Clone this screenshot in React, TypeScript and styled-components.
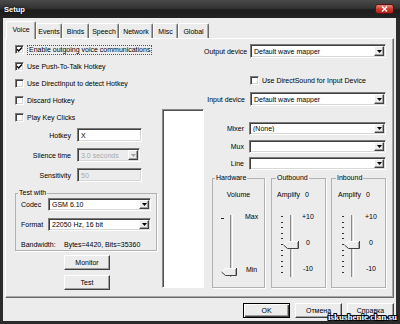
import React from 'react';
import styled, { createGlobalStyle } from 'styled-components';

const GlobalStyle = createGlobalStyle`
  html, body { margin: 0; padding: 0; background: #222; }
  body { font-family: "Liberation Sans", Arial, sans-serif; font-size: 7px; color: #000; }
  * { box-sizing: border-box; }
`;

const Window = styled.div`
  position: relative;
  width: 400px;
  height: 324px;
  display: flex;
  flex-direction: column;
  background: #2b2b2b;
  overflow: hidden;
`;

const TitleBar = styled.div`
  height: 18px;
  flex: none;
  display: flex;
  align-items: center;
  justify-content: space-between;
  padding: 0 6px 0 4px;
  background: linear-gradient(#4a4a4a 0%, #333 45%, #1d1d1d 55%, #232323 100%);
  color: #fff;
  font-weight: bold;
  font-size: 7.5px;
  text-shadow: 0 0 3px #000;
`;

const CloseBtn = styled.div`
  width: 19px;
  height: 10px;
  border-radius: 3px;
  border: 1px solid #5a1410;
  background: linear-gradient(#e8877a 0%, #cf3a2c 50%, #b1241a 100%);
  display: flex;
  align-items: center;
  justify-content: center;
`;

const Body = styled.div`
  flex: 1;
  margin: 0 4px 3px 3px;
  background: #ececec;
  padding: 3px 2px 0 2px;
  display: flex;
  flex-direction: column;
`;

const TabRow = styled.div`
  height: 17px;
  display: flex;
  align-items: flex-end;
  margin-left: 1px;
`;

const Tab = styled.div<{ $w: number; $active?: boolean }>`
  width: ${p => p.$w}px;
  height: ${p => (p.$active ? 18 : 15)}px;
  margin-bottom: ${p => (p.$active ? -1 : 0)}px;
  position: relative;
  z-index: ${p => (p.$active ? 1 : 0)};
  display: flex;
  align-items: center;
  justify-content: center;
  padding-bottom: ${p => (p.$active ? 2 : 0)}px;
  background: #ececec;
  border: 1px solid;
  border-bottom: none;
  border-color: #fff #6a6a6a #fff #fff;
  box-shadow: inset -1px 0 #a8a8a8;
  border-radius: 2px 2px 0 0;
  white-space: nowrap;
`;

const Panel = styled.div`
  height: 260px;
  flex: none;
  display: flex;
  border: 1px solid;
  border-color: #fff #6a6a6a #6a6a6a #fff;
  box-shadow: inset -1px -1px #a8a8a8;
`;

const LeftCol = styled.div`
  width: 156px;
  flex: none;
  display: flex;
  flex-direction: column;
  padding: 2px 0 0 9px;
`;

const CheckRow = styled.div<{ $h?: number; $indent?: number; $mt?: number }>`
  height: ${p => p.$h ?? 17}px;
  margin-top: ${p => p.$mt ?? 0}px;
  padding-left: ${p => p.$indent ?? 0}px;
  display: flex;
  align-items: center;
  gap: 3px;
  white-space: nowrap;
`;

const Box = styled.div`
  width: 9px;
  height: 9px;
  flex: none;
  background: #fff;
  border: 1px solid;
  border-color: #7a7a7a #fff #fff #7a7a7a;
  box-shadow: inset 1px 1px #404040, inset -1px -1px #d8d8d8;
  display: flex;
  align-items: center;
  justify-content: center;
`;

const Focus = styled.span`
  display: inline-block;
  height: 10px;
  line-height: 10px;
  padding: 0 1px;
  border: 1px dotted #555;
  line-height: 8px;
`;

const FormRow = styled.div<{ $h?: number; $mt: number; $label: number; $gap?: number; $left?: boolean }>`
  height: ${p => p.$h ?? 14}px;
  margin-top: ${p => p.$mt}px;
  display: flex;
  align-items: center;
  gap: ${p => p.$gap ?? 6}px;
  & > label {
    width: ${p => p.$label}px;
    flex: none;
    text-align: ${p => (p.$left ? 'left' : 'right')};
    white-space: nowrap;
  }
`;

const Edit = styled.div<{ $w?: number; $disabled?: boolean }>`
  width: ${p => (p.$w ? `${p.$w}px` : 'auto')};
  flex: ${p => (p.$w ? 'none' : '1')};
  height: 100%;
  display: flex;
  align-items: center;
  padding: 0 1px 0 3px;
  background: ${p => (p.$disabled ? '#ececec' : '#fff')};
  color: ${p => (p.$disabled ? '#a9a9a9' : '#000')};
  border: 1px solid;
  border-color: #7a7a7a #fff #fff #7a7a7a;
  box-shadow: inset 1px 1px #404040, inset -1px -1px #d8d8d8;
  white-space: nowrap;
`;

const ComboText = styled.span`
  flex: 1;
  overflow: hidden;
`;

const ArrowBtn = styled.div`
  width: 10px;
  height: calc(100% - 2px);
  flex: none;
  background: #ececec;
  border: 1px solid;
  border-color: #fff #404040 #404040 #fff;
  box-shadow: inset -1px -1px #a0a0a0;
  display: flex;
  align-items: center;
  justify-content: center;
`;

const Group = styled.fieldset<{ $w: number; $h?: number; $mt?: number; $ml?: number; $pad?: number }>`
  width: ${p => p.$w}px;
  ${p => (p.$h ? `height: ${p.$h}px;` : '')}
  margin: ${p => p.$mt ?? 0}px 0 0 ${p => p.$ml ?? 0}px;
  padding: 0 ${p => p.$pad ?? 0}px;
  border: 1px solid #b2b2b2;
  box-shadow: 1px 1px #fff;
  min-width: 0;
  display: flex;
  flex-direction: column;
  & > legend {
    font-size: 7px;
    line-height: 8px;
    padding: 0 1px;
  }
`;

const Legend = styled.legend<{ $ml: number }>`
  margin-left: ${p => p.$ml}px;
`;

const Bandwidth = styled.div`
  height: 12px;
  margin-top: 7px;
  display: flex;
  align-items: center;
  white-space: nowrap;
  & > span:first-child {
    width: 43px;
  }
`;

const Button = styled.button<{ $w: number; $mt?: number; $ml?: number; $default?: boolean }>`
  width: ${p => p.$w}px;
  height: 15px;
  flex: none;
  margin: ${p => p.$mt ?? 0}px 0 0 ${p => p.$ml ?? 0}px;
  padding: 0;
  font-family: inherit;
  font-size: 7px;
  color: #000;
  background: #ececec;
  border: 1px solid;
  border-color: ${p => (p.$default ? '#000' : '#fff #404040 #404040 #fff')};
  box-shadow: ${p =>
    p.$default
      ? 'inset 1px 1px #fff, inset -1px -1px #404040, inset -2px -2px #a0a0a0'
      : 'inset -1px -1px #a0a0a0'};
`;

const WhiteBox = styled.div`
  width: 42px;
  height: 179px;
  margin-top: 70px;
  flex: none;
  background: #fff;
  border: 1px solid;
  border-color: #8a8a8a #fff #fff #8a8a8a;
  box-shadow: inset 1px 1px #505050;
`;

const RightCol = styled.div`
  flex: 1;
  display: flex;
  flex-direction: column;
  padding-right: 9px;
`;

const GroupsRow = styled.div`
  margin-top: 4px;
  padding-left: 8px;
  display: flex;
  gap: 5px;
`;

const Caption = styled.div<{ $center?: boolean; $pl?: number }>`
  height: 8px;
  margin-top: 8px;
  padding-left: ${p => p.$pl ?? 0}px;
  display: flex;
  align-items: center;
  justify-content: ${p => (p.$center ? 'center' : 'flex-start')};
  gap: 5px;
  white-space: nowrap;
`;

const SliderArea = styled.div<{ $pl: number }>`
  margin-top: 15px;
  height: 66px;
  display: flex;
  padding-left: ${p => p.$pl}px;
`;

const ScaleLabels = styled.div<{ $h: number; $ml: number }>`
  height: ${p => p.$h}px;
  margin-left: ${p => p.$ml}px;
  display: flex;
  flex-direction: column;
  justify-content: space-between;
  align-items: center;
  line-height: 8px;
`;

const Footer = styled.div`
  margin-top: 5px;
  display: flex;
  justify-content: flex-end;
  gap: 5px;
`;

const Watermark = styled.div`
  position: absolute;
  right: 3px;
  bottom: 2px;
  font-family: "Liberation Serif", "Times New Roman", serif;
  font-weight: bold;
  font-size: 9px;
  color: #fff;
  text-shadow: 1px 0 #000, -1px 0 #000, 0 1px #000, 0 -1px #000, 1px 1px #000, -1px -1px #000, 1px -1px #000, -1px 1px #000;
`;

const Check = () => (
  <svg width="7" height="7" viewBox="0 0 7 7">
    <path d="M1 3.3 L2.7 5 L6 1.6" stroke="#000" strokeWidth="1.4" fill="none" />
  </svg>
);

const Arrow = ({ disabled }: { disabled?: boolean }) => (
  <svg width="5" height="3" viewBox="0 0 5 3">
    <path d="M0 0 H5 L2.5 3 Z" fill={disabled ? '#a0a0a0' : '#000'} />
  </svg>
);

const CheckBox = ({ checked }: { checked?: boolean }) => <Box>{checked && <Check />}</Box>;

const Combo = ({ value, w, disabled }: { value: string; w?: number; disabled?: boolean }) => (
  <Edit $w={w} $disabled={disabled}>
    <ComboText>{value}</ComboText>
    <ArrowBtn>
      <Arrow disabled={disabled} />
    </ArrowBtn>
  </Edit>
);

const Thumb = ({ x, y }: { x: number; y: number }) => (
  <g>
    <polygon
      points={`${x},${y + 4} ${x + 4},${y} ${x + 16},${y} ${x + 16},${y + 8} ${x + 4},${y + 8}`}
      fill="#ececec"
    />
    <polyline points={`${x + 0.5},${y + 4} ${x + 4.5},${y + 0.5} ${x + 15.5},${y + 0.5}`} stroke="#fff" fill="none" />
    <polyline
      points={`${x + 15.5},${y} ${x + 15.5},${y + 7.5} ${x + 4.5},${y + 7.5} ${x + 0.5},${y + 4}`}
      stroke="#404040"
      fill="none"
    />
    <line x1={x + 14.5} y1={y + 1} x2={x + 14.5} y2={y + 7} stroke="#a0a0a0" />
  </g>
);

const Track = ({ x }: { x: number }) => (
  <g>
    <rect x={x} y={2} width={3} height={62} fill="#dcdcdc" />
    <rect x={x} y={2} width={1} height={62} fill="#8a8a8a" />
    <rect x={x + 2} y={2} width={1} height={62} fill="#fff" />
  </g>
);

const HardwareSlider = () => (
  <svg width="24" height="66" viewBox="0 0 24 66">
    <rect x={5} y={5} width={3} height={1} fill="#222" />
    <Track x={14} />
    <Thumb x={5} y={55} />
  </svg>
);

const AmpSlider = () => (
  <svg width="21" height="66" viewBox="0 0 21 66">
    {Array.from({ length: 11 }, (_, i) => (
      <rect key={i} x={2} y={Math.round(3 + i * 5.6)} width={2} height={1} fill="#333" />
    ))}
    <Track x={11} />
    <Thumb x={4} y={28} />
  </svg>
);

const tabs: [string, number][] = [
  ['Voice', 30],
  ['Events', 26],
  ['Binds', 27],
  ['Speech', 30],
  ['Network', 34],
  ['Misc', 25],
  ['Global', 31],
];

export default function App() {
  return (
    <Window>
      <GlobalStyle />
      <TitleBar>
        <span>Setup</span>
        <CloseBtn>
          <svg width="7" height="6" viewBox="0 0 7 6">
            <path d="M1 0.5 L6 5.5 M6 0.5 L1 5.5" stroke="#fff" strokeWidth="1.4" />
          </svg>
        </CloseBtn>
      </TitleBar>
      <Body>
        <TabRow>
          {tabs.map(([name, w], i) => (
            <Tab key={name} $w={w} $active={i === 0}>
              {name}
            </Tab>
          ))}
        </TabRow>
        <Panel>
          <LeftCol>
            <CheckRow>
              <CheckBox checked />
              <Focus>Enable outgoing voice communications</Focus>
            </CheckRow>
            <CheckRow>
              <CheckBox checked />
              <span>Use Push-To-Talk Hotkey</span>
            </CheckRow>
            <CheckRow>
              <CheckBox />
              <span>Use DirectInput to detect Hotkey</span>
            </CheckRow>
            <CheckRow>
              <CheckBox />
              <span>Discard Hotkey</span>
            </CheckRow>
            <CheckRow>
              <CheckBox />
              <span>Play Key Clicks</span>
            </CheckRow>
            <FormRow $mt={2} $label={56}>
              <label>Hotkey</label>
              <Edit $w={65}>X</Edit>
            </FormRow>
            <FormRow $mt={6} $label={56}>
              <label>Silence time</label>
              <Combo value="3.0 seconds" w={63} disabled />
            </FormRow>
            <FormRow $mt={6} $label={56}>
              <label>Sensitivity</label>
              <Edit $w={65} $disabled>
                50
              </Edit>
            </FormRow>
            <Group $w={142} $mt={7} $pad={5}>
              <Legend $ml={-3}>Test with</Legend>
              <FormRow $mt={1} $h={13} $label={27} $gap={0} $left>
                <label>Codec</label>
                <Combo value="GSM 6.10" />
              </FormRow>
              <FormRow $mt={7} $h={13} $label={27} $gap={0} $left>
                <label>Format</label>
                <Combo value="22050 Hz, 16 bit" />
              </FormRow>
              <Bandwidth>
                <span>Bandwidth:</span>
                <span>Bytes=4420, Bits=35360</span>
              </Bandwidth>
            </Group>
            <Button $w={46} $mt={4} $ml={49}>
              Monitor
            </Button>
            <Button $w={46} $mt={5} $ml={49}>
              Test
            </Button>
          </LeftCol>
          <WhiteBox />
          <RightCol>
            <FormRow $mt={5} $label={41} $gap={5}>
              <label>Output device</label>
              <Combo value="Default wave mapper" />
            </FormRow>
            <CheckRow $h={8} $mt={18} $indent={46}>
              <CheckBox />
              <span>Use DirectSound for Input Device</span>
            </CheckRow>
            <FormRow $mt={8} $label={41} $gap={5}>
              <label>Input device</label>
              <Combo value="Default wave mapper" />
            </FormRow>
            <FormRow $mt={16} $h={13} $label={40} $gap={5}>
              <label>Mixer</label>
              <Combo value="(None)" />
            </FormRow>
            <FormRow $mt={5} $h={13} $label={40} $gap={5}>
              <label>Mux</label>
              <Combo value="" />
            </FormRow>
            <FormRow $mt={4} $h={13} $label={40} $gap={5}>
              <label>Line</label>
              <Combo value="" />
            </FormRow>
            <GroupsRow>
              <Group $w={53} $h={114}>
                <Legend $ml={2}>Hardware</Legend>
                <Caption $center>Volume</Caption>
                <SliderArea $pl={3}>
                  <HardwareSlider />
                  <ScaleLabels $h={61} $ml={5}>
                    <span>Max</span>
                    <span>Min</span>
                  </ScaleLabels>
                </SliderArea>
              </Group>
              <Group $w={55} $h={114} $ml={1}>
                <Legend $ml={4}>Outbound</Legend>
                <Caption $pl={5}>
                  <span>Amplify</span>
                  <span>0</span>
                </Caption>
                <SliderArea $pl={7}>
                  <AmpSlider />
                  <ScaleLabels $h={60} $ml={2}>
                    <span>+10</span>
                    <span>0</span>
                    <span>-10</span>
                  </ScaleLabels>
                </SliderArea>
              </Group>
              <Group $w={55} $h={114}>
                <Legend $ml={4}>Inbound</Legend>
                <Caption $pl={6}>
                  <span>Amplify</span>
                  <span>0</span>
                </Caption>
                <SliderArea $pl={8}>
                  <AmpSlider />
                  <ScaleLabels $h={60} $ml={4}>
                    <span>+10</span>
                    <span>0</span>
                    <span>-10</span>
                  </ScaleLabels>
                </SliderArea>
              </Group>
            </GroupsRow>
          </RightCol>
        </Panel>
        <Footer>
          <Button $w={47} $default>
            OK
          </Button>
          <Button $w={47}>Отмена</Button>
          <Button $w={47}>Справка</Button>
        </Footer>
      </Body>
      <Watermark>iskushenie.clan.su</Watermark>
    </Window>
  );
}
